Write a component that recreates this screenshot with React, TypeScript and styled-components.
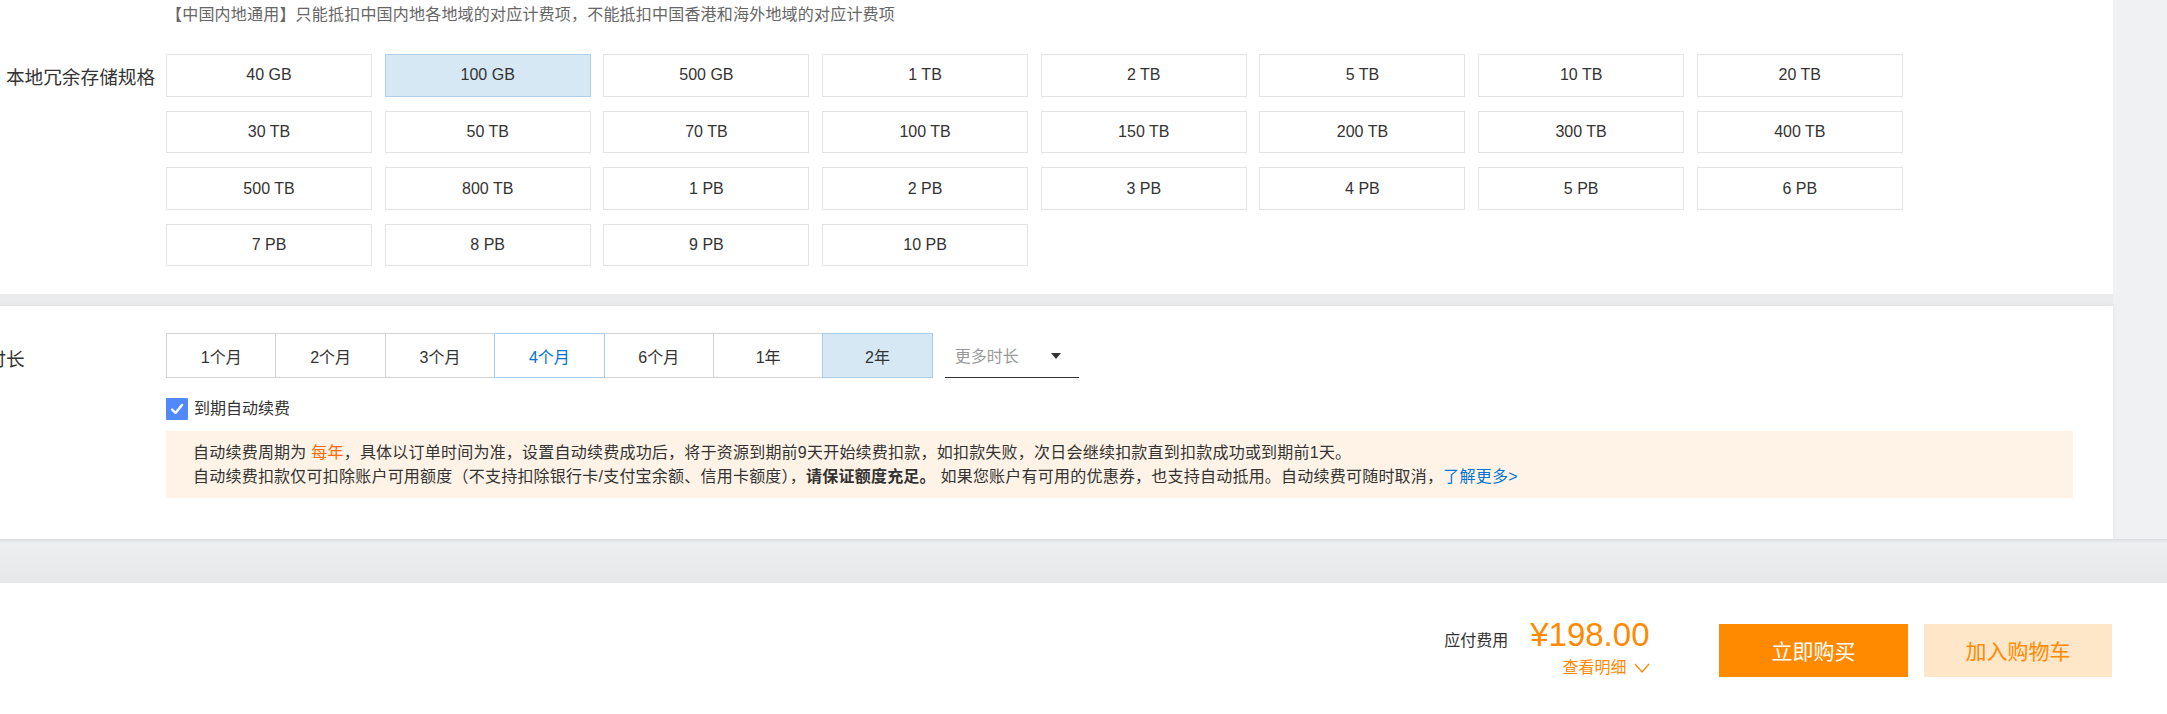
import React from "react";
import styled, { createGlobalStyle } from "styled-components";

const GlobalStyle = createGlobalStyle`
  html, body {
    margin: 0;
    padding: 0;
    background: #f0f1f3;
    overflow: hidden;
  }
  body {
    font-family: "Liberation Sans", "Noto Sans CJK SC", sans-serif;
    color: #333;
  }
  * { box-sizing: border-box; }
`;

const Page = styled.div`
  width: 2167px;
  height: 714px;
  display: flex;
  flex-direction: column;
  overflow: hidden;
`;

const Top = styled.div`
  height: 539px;
  display: flex;
`;

const Column = styled.div`
  width: 2173px;
  flex: none;
  margin-left: -60px;
  display: flex;
  flex-direction: column;
  gap: 12px;
  background: linear-gradient(#eeeff1, #e6e7e9);
`;

const Panel = styled.section<{ $height: number; $top: number; $shadow?: boolean }>`
  height: ${(p) => p.$height}px;
  padding: ${(p) => p.$top}px 0 0 10px;
  background: #fff;
  box-shadow: ${(p) => (p.$shadow ? "0 0 4px rgba(0,0,0,0.08)" : "none")};
`;

const FieldRow = styled.div<{ $mt?: number }>`
  display: grid;
  grid-template-columns: 216px 1fr;
  margin-top: ${(p) => p.$mt ?? 0}px;
`;

const Label = styled.div<{ $lh: number; $pt: number; $indent?: number }>`
  font-size: 18.67px;
  line-height: ${(p) => p.$lh}px;
  padding-top: ${(p) => p.$pt}px;
  padding-left: ${(p) => p.$indent ?? 0}px;
  white-space: nowrap;
  color: #333;
`;

const Note = styled.div`
  font-size: 16px;
  line-height: 20px;
  letter-spacing: 0.2px;
  color: #666;
  white-space: nowrap;
`;

const SpecGrid = styled.div`
  display: grid;
  grid-template-columns: repeat(8, 206px);
  grid-auto-rows: 42.4px;
  column-gap: 12.7px;
  row-gap: 14.2px;
`;

const SpecBox = styled.div<{ $selected?: boolean }>`
  display: flex;
  align-items: center;
  justify-content: center;
  font-size: 16px;
  color: #333;
  background: ${(p) => (p.$selected ? "#d7e8f5" : "#fff")};
  border: 1px solid ${(p) => (p.$selected ? "#aed0ee" : "#e3e3e3")};
`;

const Controls = styled.div`
  display: flex;
  align-items: stretch;
`;

const Tab = styled.div<{ $state?: "active" | "hover" }>`
  width: 110.4px;
  height: 45px;
  margin-left: -1px;
  &:first-child { margin-left: 0; }
  display: flex;
  align-items: center;
  justify-content: center;
  font-size: 16px;
  position: relative;
  z-index: ${(p) => (p.$state ? 1 : 0)};
  color: ${(p) => (p.$state === "hover" ? "#0073d1" : "#333")};
  background: ${(p) => (p.$state === "active" ? "#d7e8f5" : "#fff")};
  border: 1px solid ${(p) => (p.$state ? "#aacdee" : "#d4d4d4")};
`;

const Dropdown = styled.div`
  margin-left: 12px;
  width: 134px;
  height: 45px;
  padding: 0 18px 0 10px;
  display: flex;
  align-items: center;
  justify-content: space-between;
  border-bottom: 1px solid #333;
  font-size: 16px;
  color: #999;
`;

const Caret = styled.span`
  width: 0;
  height: 0;
  border-left: 5.5px solid transparent;
  border-right: 5.5px solid transparent;
  border-top: 6px solid #333;
  margin-top: 1px;
`;

const CheckRow = styled.label`
  display: flex;
  align-items: center;
  gap: 6px;
  margin-top: 19.7px;
  font-size: 16px;
  line-height: 22px;
  color: #333;
`;

const CheckBox = styled.span`
  width: 22px;
  height: 22px;
  background: #4f89fb;
  border-radius: 1px;
  display: flex;
  align-items: center;
  justify-content: center;
`;

const NoticeBox = styled.div`
  margin-top: 11px;
  width: 1907px;
  height: 66.7px;
  background: #fef3e6;
  padding: 10px 0 0 27px;
  font-size: 16px;
  line-height: 24px;
  letter-spacing: 0.22px;
  color: #333;
  white-space: nowrap;
`;

const Orange = styled.span`
  color: #ff6a00;
`;

const Strong = styled.b`
  font-weight: 700;
`;

const MoreLink = styled.a`
  color: #0073d1;
  text-decoration: none;
`;

const Band = styled.div`
  height: 44px;
  background: linear-gradient(#dcdde0 0px, #edeef0 4px, #e7e8ea 100%);
`;

const Footer = styled.footer`
  height: 131px;
  background: #fff;
  display: flex;
  justify-content: flex-end;
  align-items: flex-start;
  padding: 41px 55px 0 0;
`;

const PriceArea = styled.div`
  display: flex;
  flex-direction: column;
  align-items: flex-end;
  margin-top: -7.7px;
  margin-right: 69.5px;
`;

const PriceRow = styled.div`
  display: flex;
  align-items: baseline;
  gap: 22px;
`;

const PriceLabel = styled.span`
  font-size: 16px;
  line-height: 20px;
  color: #333;
`;

const Price = styled.span`
  font-size: 33px;
  line-height: 38px;
  color: #ff8a00;
`;

const DetailLink = styled.div`
  margin-top: 3.7px;
  display: flex;
  align-items: center;
  gap: 7px;
  font-size: 16px;
  line-height: 20px;
  color: #ff8a00;
`;

const Buttons = styled.div`
  display: flex;
  gap: 16px;
`;

const ActionButton = styled.button<{ $primary?: boolean }>`
  width: ${(p) => (p.$primary ? 189 : 188)}px;
  height: 52.7px;
  border: none;
  padding: 0;
  font-family: "Liberation Sans", "Noto Sans CJK SC", sans-serif;
  font-size: 21px;
  background: ${(p) => (p.$primary ? "#ff8a00" : "#fee6c9")};
  color: ${(p) => (p.$primary ? "#fff" : "#ff8a00")};
`;

const specs = [
  "40 GB", "100 GB", "500 GB", "1 TB", "2 TB", "5 TB", "10 TB", "20 TB",
  "30 TB", "50 TB", "70 TB", "100 TB", "150 TB", "200 TB", "300 TB", "400 TB",
  "500 TB", "800 TB", "1 PB", "2 PB", "3 PB", "4 PB", "5 PB", "6 PB",
  "7 PB", "8 PB", "9 PB", "10 PB",
];

const tabs: { label: string; state?: "active" | "hover" }[] = [
  { label: "1个月" },
  { label: "2个月" },
  { label: "3个月" },
  { label: "4个月", state: "hover" },
  { label: "6个月" },
  { label: "1年" },
  { label: "2年", state: "active" },
];

export default function App() {
  return (
    <Page>
      <GlobalStyle />
      <Top>
        <Column>
          <Panel $height={294} $top={5}>
            <FieldRow>
              <div />
              <Note>【中国内地通用】只能抵扣中国内地各地域的对应计费项，不能抵扣中国香港和海外地域的对应计费项</Note>
            </FieldRow>
            <FieldRow $mt={29.3}>
              <Label $lh={42.4} $pt={3} $indent={44.5}>- 本地冗余存储规格</Label>
              <SpecGrid>
                {specs.map((s) => (
                  <SpecBox key={s} $selected={s === "100 GB"}>{s}</SpecBox>
                ))}
              </SpecGrid>
            </FieldRow>
          </Panel>
          <Panel $height={233} $top={27.3} $shadow>
            <FieldRow>
              <Label $lh={45} $pt={4}>购买时长</Label>
              <div>
                <Controls>
                  {tabs.map((t) => (
                    <Tab key={t.label} $state={t.state}>{t.label}</Tab>
                  ))}
                  <Dropdown>
                    <span>更多时长</span>
                    <Caret />
                  </Dropdown>
                </Controls>
                <CheckRow>
                  <CheckBox>
                    <svg width="14" height="12" viewBox="0 0 14 12">
                      <polyline points="2,6.5 5.5,10 12,2" fill="none" stroke="#fff" strokeWidth="2.4" strokeLinecap="round" strokeLinejoin="round" />
                    </svg>
                  </CheckBox>
                  到期自动续费
                </CheckRow>
                <NoticeBox>
                  <div>
                    自动续费周期为 <Orange>每年</Orange>，具体以订单时间为准，设置自动续费成功后，将于资源到期前9天开始续费扣款，如扣款失败，次日会继续扣款直到扣款成功或到期前1天。
                  </div>
                  <div>
                    自动续费扣款仅可扣除账户可用额度（不支持扣除银行卡/支付宝余额、信用卡额度），<Strong>请保证额度充足。</Strong> 如果您账户有可用的优惠券，也支持自动抵用。自动续费可随时取消，<MoreLink>了解更多&gt;</MoreLink>
                  </div>
                </NoticeBox>
              </div>
            </FieldRow>
          </Panel>
        </Column>
      </Top>
      <Band />
      <Footer>
        <PriceArea>
          <PriceRow>
            <PriceLabel>应付费用</PriceLabel>
            <Price>¥198.00</Price>
          </PriceRow>
          <DetailLink>
            查看明细
            <svg width="16" height="10" viewBox="0 0 16 10">
              <polyline points="1,1 8,9 15,1" fill="none" stroke="#ff8a00" strokeWidth="1.3" />
            </svg>
          </DetailLink>
        </PriceArea>
        <Buttons>
          <ActionButton $primary>立即购买</ActionButton>
          <ActionButton>加入购物车</ActionButton>
        </Buttons>
      </Footer>
    </Page>
  );
}
